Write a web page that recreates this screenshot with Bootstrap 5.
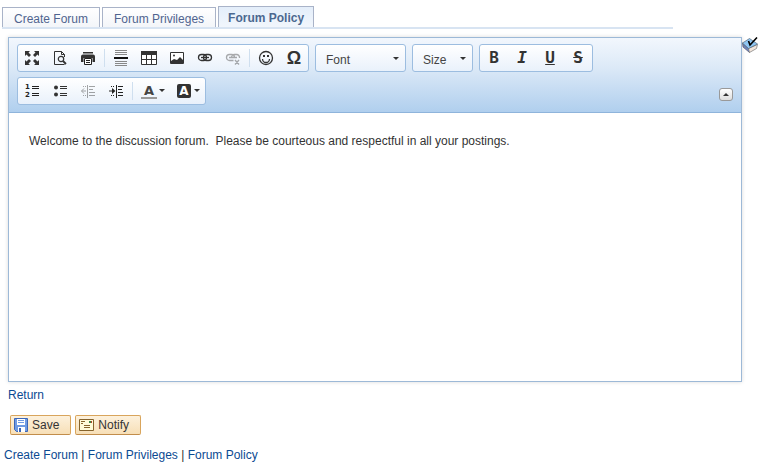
<!DOCTYPE html>
<html lang="en">
<head>
<meta charset="utf-8">
<meta name="viewport" content="width=device-width, initial-scale=1">
<title>Forum Policy</title>
<link href="https://cdn.jsdelivr.net/npm/bootstrap@5.3.0/dist/css/bootstrap.min.css" rel="stylesheet">
<style>
body{font:12px/16px "Liberation Sans",Arial,sans-serif;color:#333;background:#fff}
a{color:#0b4a92;text-decoration:none}
a:hover{text-decoration:underline}
.forum-tabs{border-bottom:2px solid #d8e4f2;margin:6px 90px 0 2px;gap:2px}
.forum-tabs a{color:#50648f;border:1px solid #a9b3c8;border-bottom:0;padding:3px 11px 0;height:20px;background:linear-gradient(#fff,#f3f5f9)}
.forum-tabs a.active{height:21px;font-weight:700;color:#4b6890;background:linear-gradient(#e4eefa,#f1f6fc);padding:3px 9px 0}
.editor-row{margin:8px 5px 0 8px}
.editor{border:1px solid #9db9d7;box-shadow:0 0 4px rgba(0,0,0,.15);min-width:0}
.toolbar{padding:6px 8px 7px;gap:5px 6px;background:linear-gradient(#f2f7fd,#dce9f7 40%,#b0cfee);border-bottom:1px solid #8fb4db}
.tool-group{height:28px;border:1px solid #9cbde0;border-radius:3px;background:linear-gradient(#fff,#e9f1fb)}
.tool{width:28px;height:26px;padding:0;border:0;background:none;color:#333}
.tool.wide{width:35px;gap:2px}
.tool svg{display:block}
.tool.glyph{font:bold 16px/26px "DejaVu Sans Mono",monospace}
.tool.omega{font:bold 18px/26px "Liberation Sans",sans-serif}
.tool.italic{font-style:italic}
.tool:disabled{opacity:.4}
.numbers{font:bold 7px/8px "DejaVu Sans",sans-serif;color:#222;gap:2px}
.divider{width:1px;height:18px;margin:0 2px;background:#cfdfef}
.pick select{appearance:none;border:0;background:none;color:#444;padding:3px 20px 0 10px;height:26px;font-size:12px}
.pick.fontname select{width:89px}
.pick.fontsize select{width:59px}
.pick::after{content:"";position:absolute;right:6px;top:12px;border:3px solid transparent;border-top-color:#333;border-bottom:0;pointer-events:none}
.collapse-tool{width:14px;height:13px;padding:0;border:1px solid #999;border-radius:3px;background:linear-gradient(#fff,#ddd);margin-bottom:4px}
.message{height:268px;padding:20px;border:0;outline:0;resize:none;line-height:16px;color:#333}
.form-foot{padding:5px 4px 0}
.form-actions{margin:12px 0 0 6px}
.action{height:20px;padding:0 11px 0 3px;border:1px solid #d9a55c;border-bottom-color:#c28d4b;border-radius:2px;background:linear-gradient(#fdf1dc,#f7dfb7);color:#333;gap:4px}
</style>
<script src="https://cdn.jsdelivr.net/npm/bootstrap@5.3.0/dist/js/bootstrap.bundle.min.js"></script>
</head>
<body>
<nav class="forum-tabs d-flex align-items-end" aria-label="Forum">
  <a href="#create">Create Forum</a>
  <a href="#privileges">Forum Privileges</a>
  <a href="#policy" class="active" aria-current="page">Forum Policy</a>
</nav>
<form>
<div class="editor-row d-flex align-items-start">
  <div class="editor flex-grow-1">
    <div class="toolbar d-flex flex-wrap align-items-end" role="toolbar" aria-label="Editor">
      <div class="tool-group d-flex align-items-center">
        <button type="button" class="tool d-flex align-items-center justify-content-center" aria-label="Maximize"><svg width="16" height="16" fill="#333"><path d="M1 1h5L4.500 2.500 7 5 5 7 2.500 4.500 1 6zM15 1v5l-1.500-1.500L11 7 9 5l2.500-2.500L10 1zM1 15v-5l1.500 1.500L5 9l2 2-2.500 2.500L6 15zM15 15h-5l1.500-1.500L9 11l2-2 2.500 2.500L15 10z"/></svg></button>
        <button type="button" class="tool d-flex align-items-center justify-content-center" aria-label="Preview"><svg width="16" height="16" fill="none" stroke="#333"><path d="M12.500 7V4.500l-3-3h-7v13h10M9.500 1.500v3h3"/><circle cx="9" cy="9" r="2.700" stroke-width="1.200"/><path d="M11 11l3 3" stroke-width="1.800"/></svg></button>
        <button type="button" class="tool d-flex align-items-center justify-content-center" aria-label="Print"><svg width="16" height="16"><path fill="#333" d="M3 2h10v1.500H3zM3 4.500h10a2 2 0 0 1 2 2V12h-2.500V8h-9v4H1V6.500a2 2 0 0 1 2-2z"/><path fill="#fff" stroke="#222" d="M4.500 8.500h7v6h-7z"/><path stroke="#222" d="M6 10.500h4M6 12.500h4"/></svg></button>
        <span class="divider"></span>
        <button type="button" class="tool d-flex align-items-center justify-content-center" aria-label="Insert page break"><svg width="16" height="16"><path stroke="#888" d="M2 .5h12M2 2.500h12M2 4.500h12M2 11.500h12M2 13.500h12M2 15.500h12"/><path fill="#111" d="M1 7h14v2H1z"/></svg></button>
        <button type="button" class="tool d-flex align-items-center justify-content-center" aria-label="Insert table"><svg width="16" height="16"><path fill="#fff" stroke="#333" d="M.5 1.500h15v13H.5zM.5 9.500h15M5.500 5v9M10.500 5v9"/><path fill="#333" d="M0 1h16v4H0z"/></svg></button>
        <button type="button" class="tool d-flex align-items-center justify-content-center" aria-label="Insert image"><svg width="16" height="16"><path fill="#fff" stroke="#333" d="M1.500 2.500h13v11h-13z"/><path fill="#333" d="M2 13v-2l3-2 3 1 3-3 3 3v3z"/><circle cx="5" cy="5.500" r="1" fill="#333"/></svg></button>
        <button type="button" class="tool d-flex align-items-center justify-content-center" aria-label="Insert link"><svg width="16" height="16" fill="none" stroke="#333" stroke-width="1.300"><rect x="1.500" y="4.500" width="8" height="6" rx="3"/><rect x="6.500" y="4.500" width="8" height="6" rx="3"/><path d="M4 7.500h8"/></svg></button>
        <button type="button" class="tool d-flex align-items-center justify-content-center" aria-label="Remove link" disabled><svg width="16" height="16" fill="none" stroke="#333" stroke-width="1.300"><path d="M8.500 10.500H4.500a3 3 0 0 1 0-6h2a3 3 0 0 1 3 3M6.500 7.500a3 3 0 0 1 3-3h2a3 3 0 0 1 3 3.500M4 7.500h8M10 10l4 4.500M14 10l-4 4.500"/></svg></button>
        <span class="divider"></span>
        <button type="button" class="tool d-flex align-items-center justify-content-center" aria-label="Insert smiley"><svg width="16" height="16" fill="none" stroke="#333"><circle cx="8" cy="8" r="6.500" stroke-width="1.300"/><path d="M4.500 9a3.500 3.500 0 0 0 7 0" stroke-width="1.300"/><path fill="#333" stroke="none" d="M5 5h2v2H5zM9 5h2v2H9z"/></svg></button>
        <button type="button" class="tool omega" aria-label="Insert symbol">Ω</button>
      </div>
      <div class="tool-group pick fontname position-relative"><select aria-label="Font"><option>Font</option></select></div>
      <div class="tool-group pick fontsize position-relative"><select aria-label="Size"><option>Size</option></select></div>
      <div class="tool-group d-flex align-items-center">
        <button type="button" class="tool glyph">B</button>
        <button type="button" class="tool glyph italic">I</button>
        <button type="button" class="tool glyph text-decoration-underline">U</button>
        <button type="button" class="tool glyph text-decoration-line-through">S</button>
      </div>
      <div class="tool-group d-flex align-items-center">
        <button type="button" class="tool numbers d-flex align-items-center justify-content-center" aria-label="Numbered list"><span>1<br>2</span><svg width="7" height="16" stroke="#222"><path d="M0 3.500h7M0 5.500h7M0 10.500h7M0 12.500h7"/></svg></button>
        <button type="button" class="tool d-flex align-items-center justify-content-center" aria-label="Bulleted list"><svg width="16" height="16" fill="#333"><circle cx="4" cy="4.500" r="2"/><circle cx="4" cy="11.500" r="2"/><path stroke="#333" d="M8 3.500h7M8 5.500h7M8 10.500h7M8 12.500h7"/></svg></button>
        <button type="button" class="tool d-flex align-items-center justify-content-center" aria-label="Decrease indent" disabled><svg width="16" height="16" fill="none" stroke="#222"><path d="M7.500 2v13M9 3.500h6M9 6.500h4M9 9.500h6M9 12.500h6M1.500 8H6M4 5.500L1.500 8 4 10.500"/><path stroke-dasharray="1 1" d="M3 3.500h4M3 12.500h4"/></svg></button>
        <button type="button" class="tool d-flex align-items-center justify-content-center" aria-label="Increase indent"><svg width="16" height="16" fill="none" stroke="#222"><path d="M8.500 2v13M10 3.500h5M10 6.500h4M10 9.500h5M10 12.500h5M1 8h5"/><path fill="#222" stroke="none" d="M4 5l3.500 3L4 11z"/><path stroke-dasharray="1 1" d="M3 3.500h4M3 12.500h4"/></svg></button>
        <span class="divider"></span>
        <button type="button" class="tool wide d-flex align-items-center justify-content-center" aria-label="Text color"><svg width="16" height="16"><text x="8" y="12" text-anchor="middle" font-family="DejaVu Sans" font-size="13" font-weight="bold" fill="#444">A</text><path fill="#999" d="M0 14h16v2H0z"/></svg><svg width="6" height="4"><path fill="#333" d="M0 0h6L3 3z"/></svg></button>
        <button type="button" class="tool wide d-flex align-items-center justify-content-center" aria-label="Background color"><svg width="16" height="16"><rect x="1" y="1" width="14" height="14" rx="2" fill="#333"/><text x="8" y="12" text-anchor="middle" font-family="DejaVu Sans" font-size="12" font-weight="bold" fill="#fff">A</text></svg><svg width="6" height="4"><path fill="#333" d="M0 0h6L3 3z"/></svg></button>
      </div>
      <button type="button" class="collapse-tool ms-auto d-flex align-items-center justify-content-center" aria-label="Collapse toolbar"><svg width="6" height="3"><path fill="#333" d="M0 3h6L3 0z"/></svg></button>
    </div>
    <textarea class="message d-block w-100" aria-label="Forum policy">Welcome to the discussion forum.  Please be courteous and respectful in all your postings.</textarea>
  </div>
  <a href="#spelling" aria-label="Check spelling"><svg class="d-block" width="16" height="17"><path fill="#6e83b8" stroke="#556" stroke-width=".7" d="M.5 6l6 5.500 1 4L1 10z"/><path fill="#f3e6dc" stroke="#777" stroke-width=".7" d="M6.500 11.500l9-4-1 4-7 4z"/><path fill="#8ec5f2" stroke="#567" stroke-width=".7" d="M.5 6l7-4.500 8 5.500-9 4.500z"/><path fill="none" stroke="#6e83b8" d="M2 9.500l5 4.500"/><path fill="none" stroke="#000" stroke-width="1.600" d="M6.500 4l1.500 4 7-7.500"/></svg></a>
</div>
<div class="form-foot">
  <div class="px-1"><a href="#return">Return</a></div>
  <div class="form-actions d-flex gap-1">
    <button type="submit" class="action d-flex align-items-center"><svg width="14" height="14"><path fill="#6f9be3" stroke="#3c66b8" d="M.5.5h13v13H2.500l-2-2z"/><path fill="#fff" d="M3 1h8v6H3zM4 9h7v5H4z"/><path stroke="#6f9be3" d="M4 2.500h6M4 4.500h6"/><path fill="#3c66b8" d="M5 10h2v4H5z"/></svg>Save</button>
    <button type="button" class="action d-flex align-items-center"><svg width="15" height="12"><path fill="#fffbd8" stroke="#85632c" d="M.5.500h14v11H.5z"/><path stroke="#85632c" d="M2 2.500h4M2 4.500h2M5 6.500h6M5 8.500h6"/><path fill="#3b8a48" d="M10 2h3v2h-3z"/><path fill="#b5422b" d="M12 2h1v2h-1z"/></svg>Notify</button>
  </div>
  <div class="mt-2 pt-1"><a href="#create">Create Forum</a> | <a href="#privileges">Forum Privileges</a> | <a href="#policy">Forum Policy</a></div>
</div>
</form>
</body>
</html>
